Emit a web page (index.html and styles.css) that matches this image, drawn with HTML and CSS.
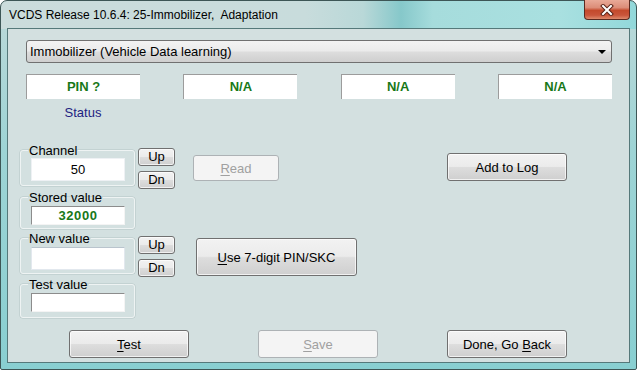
FILE: index.html
```html
<!DOCTYPE html>
<html lang="en">
<head>
  <meta charset="UTF-8">
  <meta name="viewport" content="width=device-width, initial-scale=1.0">
  <title>VCDS Adaptation</title>
  <link rel="stylesheet" href="styles.css">
</head>
<body>
  <div class="window">
    <div class="titlebar">
      <span class="title">VCDS Release 10.6.4: 25-Immobilizer,  Adaptation</span>
      <button class="close" type="button" aria-label="Close">
        <svg width="14" height="12" viewBox="0 0 14 12">
          <path d="M3 2 L11 10 M11 2 L3 10" stroke="#5a2418" stroke-width="4" stroke-linecap="square"/>
          <path d="M3 2 L11 10 M11 2 L3 10" stroke="#ffffff" stroke-width="2" stroke-linecap="square"/>
        </svg>
      </button>
    </div>

    <div class="client">
      <div class="select">
        <span>Immobilizer (Vehicle Data learning)</span>
        <span class="arrow"></span>
      </div>

      <div class="status-row">
        <div class="field">PIN ?</div>
        <div class="field">N/A</div>
        <div class="field">N/A</div>
        <div class="field">N/A</div>
      </div>
      <div class="status-label">Status</div>

      <div class="row row-channel">
        <fieldset class="group">
          <legend>Channel</legend>
          <input class="edit tall" type="text" value="50">
        </fieldset>
        <div class="updn">
          <button class="btn small" type="button">Up</button>
          <button class="btn small" type="button">Dn</button>
        </div>
        <button class="btn read" type="button" disabled><u>R</u>ead</button>
        <button class="btn wide log" type="button">Add to Log</button>
      </div>

      <div class="row row-stored">
        <fieldset class="group">
          <legend>Stored value</legend>
          <div class="static value">32000</div>
        </fieldset>
      </div>

      <div class="row row-new">
        <fieldset class="group">
          <legend>New value</legend>
          <input class="edit tall" type="text" value="">
        </fieldset>
        <div class="updn">
          <button class="btn small" type="button">Up</button>
          <button class="btn small" type="button">Dn</button>
        </div>
        <button class="btn pin" type="button"><u>U</u>se 7-digit PIN/SKC</button>
      </div>

      <div class="row row-test">
        <fieldset class="group">
          <legend>Test value</legend>
          <div class="static"></div>
        </fieldset>
      </div>

      <div class="row row-actions">
        <button class="btn wide" type="button"><u>T</u>est</button>
        <button class="btn wide" type="button" disabled><u>S</u>ave</button>
        <button class="btn wide" type="button">Done, Go <u>B</u>ack</button>
      </div>
    </div>
  </div>
</body>
</html>
```

FILE: styles.css
```css
html, body {
  margin: 0;
  padding: 0;
  background: #ffffff;
}
body {
  font-family: "Liberation Sans", Arial, sans-serif;
  font-size: 13px;
  color: #000;
}
.window {
  width: 637px;
  height: 370px;
  box-sizing: border-box;
  display: flex;
  flex-direction: column;
  padding: 0 6px 6px 6px;
  border: 1px solid #3d5656;
  border-radius: 7px 7px 2px 2px;
  background:
    linear-gradient(90deg, #cbdcdc 0%, #c8dcdc 48%, #b9d8d8 57%, #86c8ca 63%, #a6dcdc 68%, #a9e0e0 88%, #92d8da 100%) top / 100% 28px no-repeat,
    linear-gradient(180deg, #bcd9d9 0%, #9ed4d5 40%, #88cfd1 100%);
}
.titlebar {
  height: 27px;
  display: flex;
  align-items: flex-start;
}
.title {
  font-size: 12px;
  line-height: 14px;
  padding-top: 7px;
  margin-left: 2px;
  white-space: pre;
  color: #000;
}
.close {
  margin-left: auto;
  margin-right: 0;
  margin-top: -1px;
  width: 46px;
  height: 20px;
  padding: 0;
  border: 1px solid #5a2a20;
  border-top: none;
  border-radius: 0 0 4px 4px;
  background: linear-gradient(180deg, #e9aa98 0%, #dc8d78 40%, #c44a2c 55%, #c9553a 80%, #de8a6c 100%);
  display: flex;
  align-items: center;
  justify-content: center;
}
.client {
  flex: 1;
  border: 1px solid #55797a;
  background: #d3e0e0;
  padding: 11px 0 0 12px;
}

/* combo box */
.select {
  margin-left: 6px;
  width: 586px;
  height: 23px;
  box-sizing: border-box;
  border: 1px solid #707070;
  border-radius: 3px;
  background: linear-gradient(180deg, #f3f3f3 0%, #ebebeb 48%, #dddddd 52%, #cfcfcf 100%);
  display: flex;
  align-items: center;
  padding: 0 5px 0 3px;
  line-height: 15px;
}
.select .arrow {
  margin-left: auto;
  width: 0;
  height: 0;
  border-left: 4px solid transparent;
  border-right: 4px solid transparent;
  border-top: 4px solid #000;
}

/* status fields */
.status-row {
  margin: 11px 0 0 6px;
  width: 586px;
  display: flex;
  justify-content: space-between;
}
.field {
  width: 114px;
  height: 25px;
  box-sizing: border-box;
  background: #fff;
  border-top: 1px solid #9c9c9c;
  border-left: 1px solid #9c9c9c;
  color: #187818;
  font-weight: bold;
  text-align: center;
  line-height: 23px;
}
.status-label {
  margin: 6px 0 0 6px;
  width: 114px;
  text-align: center;
  line-height: 15px;
  color: #1e1e82;
}

/* rows */
.row {
  display: flex;
  align-items: flex-start;
}
.row-channel { margin-top: 23px; }
.row-stored { margin-top: 1px; }
.row-new { margin-top: 2px; }
.row-test { margin-top: 0; }
.row-actions {
  margin-top: 12px;
  padding-left: 49px;
  gap: 69px;
}

/* group boxes */
.group {
  width: 115px;
  box-sizing: border-box;
  margin: 0;
  padding: 0 9px 3px 10px;
  border: 1px solid #eef3f3;
  border-radius: 3px;
  box-shadow: 0 0 0 0.5px #b4c3c3;
  min-inline-size: 0;
}
.group legend {
  padding: 0 1px;
  margin-left: -3px;
  line-height: 15px;
  font-size: 13px;
}
.edit {
  display: block;
  width: 94px;
  box-sizing: border-box;
  margin: 1px 0 0 0;
  padding: 0;
  border: 1px solid #e2e8ee;
  border-top-color: #b9c4cd;
  background: #fff;
  font-family: "Liberation Sans", Arial, sans-serif;
  font-size: 13px;
  text-align: center;
  outline: none;
}
.row-channel .edit {
  margin-top: 0;
  border-color: #eef1f4;
  padding-bottom: 1px;
}
.row-channel .group { padding-bottom: 4px; }
.edit.tall { height: 23px; }
.static {
  width: 94px;
  height: 19px;
  box-sizing: border-box;
  margin-top: 1px;
  background: #fff;
  border-top: 1px solid #8c8c8c;
  border-left: 1px solid #8c8c8c;
  border-bottom: 1px solid #f4f4f4;
  border-right: 1px solid #f4f4f4;
  text-align: center;
  line-height: 17px;
}
.row-test .group { padding-bottom: 5px; }
.static.value {
  color: #187818;
  font-weight: bold;
  letter-spacing: 0.6px;
}

/* buttons */
.btn {
  box-sizing: border-box;
  margin: 0;
  padding: 0;
  border: 1px solid #707070;
  border-radius: 3px;
  background: linear-gradient(180deg, #f2f2f2 0%, #ebebeb 48%, #dddddd 52%, #cfcfcf 100%);
  box-shadow: inset 0 0 0 1px rgba(255, 255, 255, 0.7);
  font-family: "Liberation Sans", Arial, sans-serif;
  font-size: 13px;
  color: #000;
  cursor: default;
}
.btn:disabled {
  border-color: #adb2b5;
  background: #f4f4f4;
  box-shadow: none;
  color: #a0a0a0;
}
.btn u { text-underline-offset: 2px; }
.updn {
  margin: 5px 0 0 3px;
  display: flex;
  flex-direction: column;
  gap: 5px;
}
.btn.small {
  width: 37px;
  height: 18px;
  line-height: 14px;
}
.btn.read {
  margin: 12px 0 0 18px;
  width: 86px;
  height: 26px;
}
.btn.wide {
  width: 120px;
  height: 28px;
}
.btn.log {
  margin: 10px 0 0 168px;
}
.btn.pin {
  margin: 7px 0 0 21px;
  width: 161px;
  height: 38px;
}
```
